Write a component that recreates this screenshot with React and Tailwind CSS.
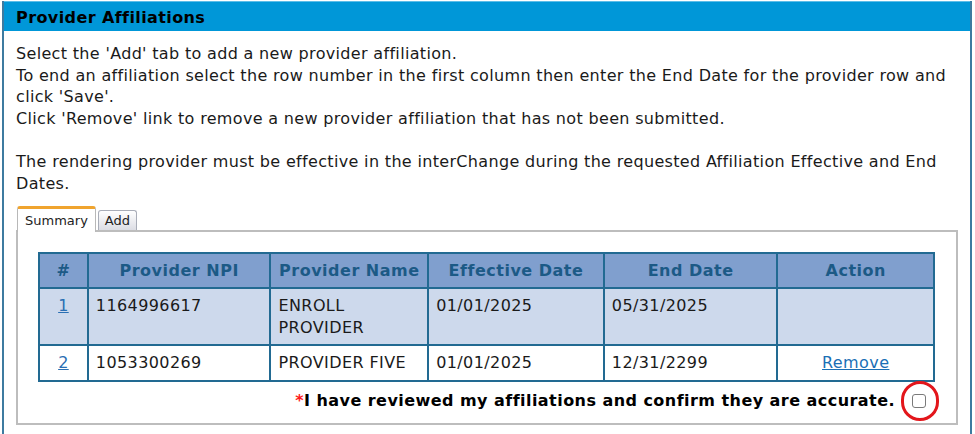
import React from "react";

const rows = [
  { n: "1", npi: "1164996617", name: ["ENROLL", "PROVIDER"], eff: "01/01/2025", end: "05/31/2025", action: "", bg: "bg-[#cdd9ec]" },
  { n: "2", npi: "1053300269", name: ["PROVIDER FIVE"], eff: "01/01/2025", end: "12/31/2299", action: "Remove", bg: "bg-white" },
];

export default function App() {
  return (
    <div className="w-[975px] h-[434px] bg-white overflow-hidden font-['DejaVu_Sans',Verdana,sans-serif]">
      <div className="ml-[2px] mt-[1px] w-[970px] h-[433px] border-l-2 border-r-2 border-[#3d7ba0] flex flex-col">
        <div className="h-[30px] bg-[#0097d8] border-t border-[#5cbde8] flex items-center pl-[12px] pt-[2px] text-[16px] tracking-[0.4px] font-bold text-black">
          Provider Affiliations
        </div>
        <div className="px-[12px] pt-[12px] text-[16px] tracking-[0.33px] leading-[21.6px] text-[#1a1a1a]">
          <p>Select the 'Add' tab to add a new provider affiliation.</p>
          <p>
            To end an affiliation select the row number in the first column then enter the End Date for the provider row and
            <br />
            click 'Save'.
          </p>
          <p>Click 'Remove' link to remove a new provider affiliation that has not been submitted.</p>
          <p className="mt-[21.6px]">
            The rendering provider must be effective in the interChange during the requested Affiliation Effective and End
            <br />
            Dates.
          </p>
        </div>
        <div className="mt-[11px] ml-[12px] w-[942px]">
          <div className="flex items-end h-[25px] pl-[1px]">
            <div className="h-[26px] -mb-[2px] relative z-10 bg-white border-t-[3px] border-t-[#f0a42e] border-x border-[#b8b8b8] rounded-t-[3px] px-[7px] flex items-center text-[13px] text-[#222]">
              Summary
            </div>
            <div className="ml-[2px] h-[20px] bg-gradient-to-b from-[#ffffff] to-[#dcdde4] border border-b-0 border-[#a9adb8] rounded-t-[3px] px-[6px] flex items-center text-[13px] text-[#222]">
              Add
            </div>
          </div>
          <div className="h-[195px] border-2 border-[#bdbdbd] bg-white pt-[20px] px-[20px]">
            <table className="w-[897px] border-collapse border-2 border-[#226a92] text-[16px] tracking-[0.4px] leading-[21.6px] text-[#1a1a1a]">
              <colgroup>
                <col className="w-[49px]" />
                <col className="w-[183px]" />
                <col className="w-[158px]" />
                <col className="w-[176px]" />
                <col className="w-[174px]" />
                <col className="w-[157px]" />
              </colgroup>
              <thead>
                <tr className="h-[35px] bg-[#809fce] text-[#1c5a86]">
                  {["#", "Provider NPI", "Provider Name", "Effective Date", "End Date", "Action"].map((h) => (
                    <th key={h} className="border-2 border-[#226a92] font-bold text-center px-[4px] tracking-[0.5px]">
                      {h}
                    </th>
                  ))}
                </tr>
              </thead>
              <tbody>
                {rows.map((r) => (
                  <tr key={r.n} className={r.bg}>
                    <td className="border-2 border-[#226a92] text-center align-top py-[6px]">
                      <a className="text-[#2a6fb3] underline">{r.n}</a>
                    </td>
                    <td className="border-2 border-[#226a92] align-top py-[6px] px-[7px]">{r.npi}</td>
                    <td className="border-2 border-[#226a92] align-top py-[6px] px-[7px]">
                      {r.name.map((l, i) => (
                        <div key={i}>{l}</div>
                      ))}
                    </td>
                    <td className="border-2 border-[#226a92] align-top py-[6px] px-[7px]">{r.eff}</td>
                    <td className="border-2 border-[#226a92] align-top py-[6px] px-[7px]">{r.end}</td>
                    <td className="border-2 border-[#226a92] align-top py-[6px] text-center">
                      {r.action && <a className="text-[#1a6fb5] underline">{r.action}</a>}
                    </td>
                  </tr>
                ))}
              </tbody>
            </table>
            <div className="flex justify-end items-center mt-[7px] pr-[10px] text-[16px] tracking-[0.45px] font-bold text-black">
              <span>
                <span className="text-[#ff1a1a]">*</span>I have reviewed my affiliations and confirm they are accurate.
              </span>
              <span className="relative ml-[17px] w-[14px] h-[14px] border border-[#7a7a7a] rounded-[3px] bg-white">
                <span className="absolute -left-[12px] -top-[14px] w-[38px] h-[40px] rounded-full border-[3px] border-[#e3161b]" />
              </span>
            </div>
          </div>
        </div>
      </div>
    </div>
  );
}
